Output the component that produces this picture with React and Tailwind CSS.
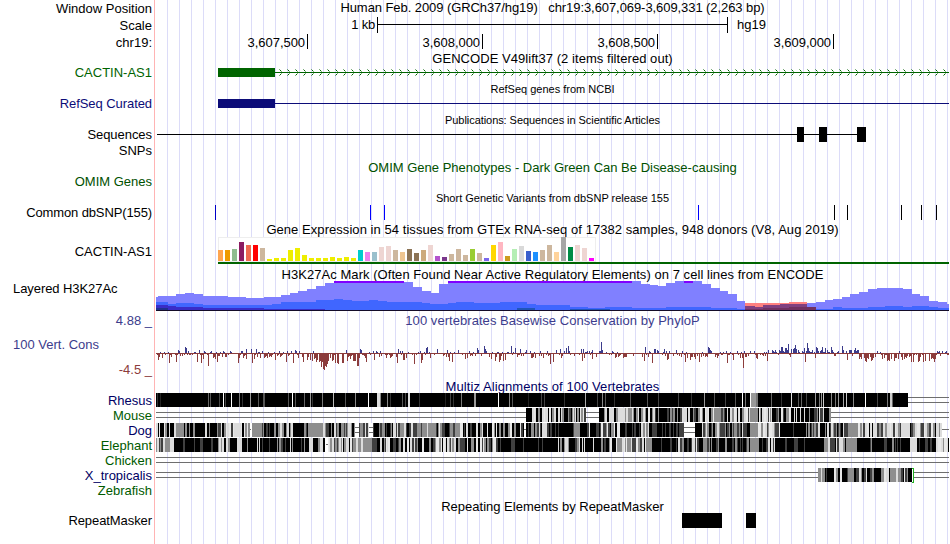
import React from "react";

const LEFT = 156;
const WIDTH = 793;

const tissues = [
  ["#ffa54f", 11], ["#ee9a00", 11], ["#8fbc8f", 12], ["#8b1c62", 19],
  ["#ee6a50", 16], ["#ff0000", 16], ["#cdb79e", 13], ["#eeee00", 2],
  ["#eeee00", 3], ["#eeee00", 3], ["#eeee00", 11], ["#eeee00", 13],
  ["#eeee00", 6], ["#eeee00", 3], ["#eeee00", 3], ["#eeee00", 3],
  ["#eeee00", 4], ["#eeee00", 3], ["#eeee00", 4], ["#eeee00", 3],
  ["#00cdcd", 11], ["#ee82ee", 9], ["#9ac0cd", 9], ["#eed5d2", 14],
  ["#eed5d2", 15], ["#cdb79e", 11], ["#eec591", 9], ["#8b7355", 12],
  ["#8b7355", 8], ["#cdaa7d", 11], ["#eed5d2", 16], ["#b452cd", 5],
  ["#7a378b", 4], ["#cdb79e", 7], ["#cdb79e", 12], ["#cdb79e", 6],
  ["#9acd32", 12], ["#cdb79e", 8], ["#7a67ee", 3], ["#ffd700", 16],
  ["#ffb6c1", 19], ["#cd9b1d", 5], ["#b4eeb4", 12], ["#d9d9d9", 15],
  ["#3a5fcd", 10], ["#1e90ff", 9], ["#cdb79e", 11], ["#cdb79e", 16],
  ["#ffd39b", 9], ["#a6a6a6", 24], ["#008b45", 14], ["#eed5d2", 16],
  ["#eed5d2", 13], ["#ff00ff", 3],
];

// [x, top] pairs, each level holds until the next x
const h3kLight = [
  [156, 297], [158, 296], [176, 294], [185, 293], [194, 294], [203, 296], [228, 297],
  [246, 298], [264, 297], [281, 295], [290, 293], [298, 291], [307, 289], [316, 286],
  [325, 283], [334, 281], [404, 282], [413, 287], [422, 291], [431, 293], [439, 284],
  [448, 281], [641, 284], [650, 285], [658, 286], [666, 283], [675, 281], [702, 284],
  [711, 288], [720, 291], [728, 294], [737, 301], [745, 306], [755, 307], [763, 305],
  [780, 304], [807, 303], [816, 302], [825, 300], [833, 299], [842, 297], [850, 294],
  [859, 292], [868, 289], [877, 288], [894, 288], [903, 289], [912, 291], [912, 294],
  [920, 296], [929, 301], [938, 302], [947, 304],
];
const h3kMid = [
  [156, 302], [168, 304], [176, 303], [194, 304], [203, 305], [264, 305], [272, 304],
  [281, 302], [316, 300], [334, 299], [343, 300], [352, 301], [369, 300], [378, 301],
  [387, 302], [422, 303], [430, 304], [448, 303], [456, 302], [474, 303], [500, 302],
  [527, 304], [536, 305], [570, 307], [588, 308], [605, 307], [632, 308], [666, 307],
  [711, 308], [737, 309], [816, 309], [833, 307], [842, 308], [868, 307], [885, 306],
  [903, 307], [912, 306], [929, 307], [938, 308],
];
const h3kDark = [
  [156, 305], [168, 306], [176, 307], [203, 308], [264, 309], [325, 310],
];

const stepPath = (steps, end = 949, base = 311) => {
  let d = `M${steps[0][0]} ${base}`;
  steps.forEach(([x, y], i) => {
    const next = i + 1 < steps.length ? steps[i + 1][0] : end;
    d += `L${x} ${y}H${next}`;
  });
  return d + `V${base}Z`;
};

const makeRandom = (seed) => () => {
  seed = (seed + 0x6d2b79f5) | 0;
  let t = Math.imul(seed ^ (seed >>> 15), 1 | seed);
  t = (t + Math.imul(t ^ (t >>> 7), 61 | t)) ^ t;
  return ((t ^ (t >>> 14)) >>> 0) / 4294967296;
};

const phyloDown = {
  158: 7, 159: 4, 162: 5, 169: 10, 171: 4, 176: 9, 182: 3, 197: 9, 201: 10, 203: 6,
  208: 13, 215: 6, 217: 9, 222: 4, 225: 4, 238: 10, 239: 5, 243: 5, 246: 6, 252: 10,
  254: 6, 260: 5, 275: 7, 286: 9, 293: 10, 298: 5, 303: 9, 307: 7, 310: 7, 312: 8,
  314: 6, 316: 9, 317: 7, 319: 9, 320: 8, 321: 14, 322: 9, 323: 16, 324: 17, 325: 13,
  326: 14, 327: 11, 328: 8, 333: 7, 335: 10, 337: 10, 338: 11, 342: 10, 343: 10, 350: 6,
  353: 8, 355: 8, 357: 13, 358: 13, 366: 9, 374: 7, 397: 10, 403: 7, 404: 7, 414: 11,
  421: 10, 422: 7, 449: 8, 452: 9, 465: 6, 491: 6, 495: 8, 499: 9, 500: 7, 503: 8,
  505: 7, 532: 5, 535: 5, 550: 11, 553: 9, 582: 8, 592: 6, 615: 5, 623: 5, 644: 8,
  652: 10, 667: 7, 668: 6, 685: 9, 687: 5, 690: 7, 695: 6, 699: 9, 717: 5, 727: 10,
  733: 7, 743: 15, 757: 6, 767: 8, 790: 4, 805: 9, 815: 5, 847: 7, 861: 6, 864: 5,
  866: 9, 868: 6, 882: 6, 888: 7, 904: 6, 911: 9, 913: 9, 918: 9, 919: 8, 923: 9,
  925: 8, 932: 5, 934: 9, 935: 6,
};
const phyloUp = {
  178: 3, 185: 6, 186: 5, 188: 2, 199: 3, 230: 2, 246: 4, 251: 4, 256: 4, 295: 3,
  296: 2, 346: 3, 360: 4, 361: 3, 398: 4, 402: 2, 426: 5, 427: 6, 437: 4, 447: 3,
  458: 3, 477: 5, 478: 3, 484: 7, 485: 4, 511: 7, 515: 5, 520: 4, 526: 3, 556: 3,
  560: 4, 566: 5, 568: 7, 581: 4, 583: 4, 592: 3, 601: 11, 602: 3, 645: 6, 649: 2,
  654: 4, 655: 4, 657: 3, 664: 4, 676: 3, 708: 6, 709: 5, 710: 3, 711: 2, 754: 2,
  768: 3, 781: 6, 782: 6, 785: 5, 786: 5, 788: 9, 791: 4, 793: 4, 794: 5, 795: 8,
  796: 4, 804: 5, 807: 10, 808: 5, 816: 6, 817: 5, 822: 6, 825: 5, 831: 6, 842: 7,
  850: 3, 855: 5, 857: 3, 937: 2, 946: 2,
};

const phyloBars = () => {
  const random = makeRandom(77);
  const bars = [];
  for (let x = LEFT; x < LEFT + WIDTH; x++) {
    const r = random();
    const s = random();
    const conserved = x > 765 && x < 860;
    const dense = (x > 300 && x < 360) || (x > 858 && x < 938);
    let up = phyloUp[x] || 0;
    let down = phyloDown[x] || 0;
    if (!up && !down) {
      if (r < (dense ? 0.06 : conserved ? 0.6 : 0.26)) {
        up = 1 + Math.floor(s * (conserved ? 3 : 2));
      } else if (r < 0.85) {
        down = 1 + Math.floor(s * s * (dense ? 8 : 4.5));
      }
    }
    bars.push({ x, up, down: Math.max(down, 1) });
  }
  return bars;
};

// [x, width, color]
const rhesusMarks = [
  [157, 1, "#333"], [160, 1, "#222"], [208, 1, "#666"], [210, 1, "#555"],
  [219, 1, "#444"], [223, 1, "#fff"], [225, 1, "#444"], [231, 1, "#fff"],
  [239, 1, "#777"], [242, 1, "#333"], [250, 1, "#999"], [258, 1, "#555"],
  [263, 2, "#555"], [288, 1, "#555"], [292, 1, "#fff"], [295, 1, "#555"],
  [304, 1, "#666"], [310, 1, "#999"], [312, 1, "#333"], [322, 1, "#777"],
  [333, 1, "#bbb"], [345, 1, "#555"], [355, 1, "#888"], [368, 1, "#fff"],
  [377, 3, "#ddd"], [380, 1, "#888"], [387, 1, "#888"], [390, 1, "#333"],
  [402, 1, "#555"], [405, 1, "#444"], [408, 2, "#ddd"], [419, 1, "#333"],
  [445, 1, "#222"], [450, 1, "#444"], [453, 1, "#333"], [461, 1, "#777"],
  [474, 2, "#999"], [498, 1, "#fff"], [509, 1, "#888"], [512, 1, "#555"],
  [528, 1, "#222"], [541, 1, "#444"], [544, 1, "#444"], [564, 1, "#333"],
  [585, 1, "#aaa"], [597, 1, "#444"], [602, 1, "#888"], [605, 1, "#555"],
  [614, 1, "#333"], [630, 1, "#555"], [647, 1, "#555"], [658, 1, "#444"],
  [678, 1, "#444"], [691, 1, "#333"], [704, 1, "#999"], [714, 1, "#555"],
  [725, 1, "#444"], [735, 1, "#555"], [742, 1, "#fff"], [745, 1, "#777"],
  [750, 1, "#fff"], [751, 5, "#999"], [756, 2, "#777"], [771, 1, "#666"],
  [781, 1, "#333"], [791, 1, "#ddd"], [798, 1, "#555"], [801, 1, "#666"],
  [806, 1, "#444"], [815, 1, "#999"], [819, 1, "#777"], [821, 1, "#999"],
  [823, 1, "#ccc"], [831, 1, "#888"], [835, 1, "#777"], [838, 1, "#999"],
  [843, 1, "#aaa"], [846, 1, "#ccc"], [853, 1, "#888"], [865, 1, "#fff"],
  [877, 1, "#444"], [887, 1, "#777"], [890, 2, "#ccc"], [892, 1, "#666"],
];

// [from, to, shade levels to choose among: 0 black .. 4 lightest]
const mouse = [
  [526, 532, "000"], [532, 558, "02334"], [558, 586, "00012234"], [599, 604, "0"],
  [604, 632, "223340"], [632, 655, "2233040"], [655, 682, "000122"], [682, 750, "001223304"],
  [750, 758, "2"], [758, 762, "024"], [762, 787, "001234"], [787, 829, "000001234"], [829, 831, "2"],
];
const dog = [
  [156, 158, "3"], [158, 176, "00234"], [176, 184, "2"], [184, 202, "00002"],
  [202, 210, "0223"], [210, 217, "0"], [217, 220, "123"], [220, 250, "01223344"], [252, 262, "2"],
  [262, 308, "0001223"], [308, 318, "2"], [318, 326, "23"], [326, 355, "001223"], [359, 369, "1223"],
  [373, 392, "000122"], [392, 410, "233401"], [410, 462, "001122234"], [462, 524, "00000112234"],
  [526, 542, "011234"], [542, 547, "3"], [547, 574, "0000001"], [574, 579, "2"], [579, 620, "0001224"],
  [620, 641, "00001"], [641, 652, "3402"], [652, 681, "0001"], [681, 684, "1"],
  [695, 699, "0"], [699, 750, "0011223"], [750, 758, "2"], [758, 780, "12234"],
  [780, 790, "0"], [790, 812, "000012"], [812, 848, "0011223"], [848, 858, "2"], [858, 942, "0122334"],
];
const elephant = [
  [156, 165, "01223"], [165, 174, "2334"], [174, 185, "0012"], [185, 194, "0"],
  [194, 216, "00001"], [216, 230, "2340"], [230, 260, "0000023"], [260, 318, "00000123"],
  [318, 325, "0023"], [328, 354, "12223340"], [354, 372, "2223"], [372, 424, "00011234"],
  [424, 456, "000122344"], [456, 500, "00001124"], [500, 546, "000001"], [546, 556, "0"],
  [556, 608, "0000123"], [608, 632, "222340"], [632, 646, "0001234"], [646, 652, "2"],
  [652, 678, "00001"], [678, 700, "011234"], [700, 750, "0000122"], [750, 758, "2"],
  [758, 775, "01233"], [775, 823, "0000001"], [823, 848, "0011223"], [848, 857, "2"],
  [857, 866, "000"], [866, 902, "0000012"], [902, 910, "0"], [910, 917, "3"], [917, 934, "0001"], [934, 949, "001223344"],
];
const xTropicalis = [
  [818, 820, "2"], [820, 827, "01234"], [827, 832, "0"], [832, 848, "0001234"],
  [848, 854, "2"], [854, 878, "0001223"], [878, 890, "012334"], [890, 901, "22223"],
  [901, 908, "1240"], [908, 912, "0"],
];

const shades = ["#000", "#404040", "#8e8e8e", "#dcdcdc", "#e8e8e8"];

const shadeBars = (segments, seed) => {
  const random = makeRandom(seed);
  const bars = [];
  segments.forEach(([from, to, levels]) => {
    let x = from;
    while (x < to) {
      const w = Math.min(to - x, random() < 0.55 ? 1 : 2);
      bars.push({ x, w, fill: shades[Number(levels[Math.floor(random() * levels.length)])] });
      x += w;
    }
  });
  return bars;
};

const arrows = Array.from({ length: 84 }, (_, i) => 279 + i * 8);

// Coordinates inside a track are those of the whole browser image
const Track = ({ top, height, children }) => (
  <svg
    className="block shrink-0"
    width={WIDTH}
    height={height}
    viewBox={`${LEFT} ${top} ${WIDTH} ${height}`}
    shapeRendering="crispEdges"
  >
    {children}
  </svg>
);

const Title = ({ children, className = "" }) => (
  <div className={`flex shrink-0 items-center justify-center whitespace-pre ${className}`}>
    {children}
  </div>
);

const Label = ({ children, className = "" }) => (
  <div className={`flex h-[15px] shrink-0 items-center justify-end whitespace-pre ${className}`}>
    {children}
  </div>
);

const Alignment = ({ segments, seed, y }) =>
  shadeBars(segments, seed).map((b, i) => (
    <rect key={i} x={b.x} y={y} width={b.w} height="14" fill={b.fill} />
  ));

const DoubleLine = ({ from, to, y }) => (
  <g fill="#6e6e6e">
    <rect x={from} y={y + 4} width={to - from} height="1" />
    <rect x={from} y={y + 9} width={to - from} height="1" />
  </g>
);

const Labels = () => (
  <div className="flex w-[155px] shrink-0 flex-col border-r border-[#ffb4b4] pr-[2px]">
    <Label className="h-[17px]">Window Position</Label>
    <Label className="h-[17px]">Scale</Label>
    <Label className="h-[17px]">chr19:</Label>
    <Label className="mt-[14px] text-[#006400]">CACTIN-AS1</Label>
    <Label className="mt-4 tracking-[-0.07px] text-[#0c0c78]">RefSeq Curated</Label>
    <Label className="mt-4 tracking-[-0.05px]">Sequences</Label>
    <Label className="mt-px">SNPs</Label>
    <Label className="mt-4 text-[#005000]">OMIM Genes</Label>
    <Label className="mt-4 tracking-[-0.12px]">Common dbSNP(155)</Label>
    <Label className="mt-6">CACTIN-AS1</Label>
    <Label className="mt-[22px] justify-start pl-[13px] tracking-[-0.07px]">Layered H3K27Ac</Label>
    <Label className="mt-[17px] text-[#3c3c8c]">4.88 _</Label>
    <Label className="mt-[9px] justify-start pl-[13px] text-[#3c3c8c]">100 Vert. Cons</Label>
    <Label className="mt-[10px] text-[#8c3c3c]">-4.5 _</Label>
    <Label className="mt-4 text-[#000064]">Rhesus</Label>
    <Label className="text-[#005a00]">Mouse</Label>
    <Label className="text-[#000064]">Dog</Label>
    <Label className="text-[#005a00]">Elephant</Label>
    <Label className="text-[#005a00]">Chicken</Label>
    <Label className="text-[#000064]">X_tropicalis</Label>
    <Label className="text-[#005a00]">Zebrafish</Label>
    <Label className="mt-[15px] tracking-[-0.08px]">RepeatMasker</Label>
  </div>
);

const ScaleBar = () => (
  <div className="flex h-[18px] shrink-0 items-center pl-[193px]">
    <span className="w-[26px] whitespace-nowrap pb-px text-right tracking-[-0.2px]">1 kb</span>
    <div className="ml-[2px] flex h-4 w-[351px] items-center border-x border-black">
      <div className="mb-px h-px w-full bg-black" />
    </div>
    <span className="ml-[9px] pb-px">hg19</span>
  </div>
);

const Ruler = () => (
  <div className="flex h-4 shrink-0 items-start">
    {[
      ["3,607,500", "w-[152px]"],
      ["3,608,000", "w-[175px]"],
      ["3,608,500", "w-[175px]"],
      ["3,609,000", "w-[176px]"],
    ].map(([position, width]) => (
      <div
        key={position}
        className={`flex h-[15px] items-center justify-end border-r border-black pr-[2px] pt-[2px] tracking-[-0.05px] ${width}`}
      >
        {position}
      </div>
    ))}
  </div>
);

const App = () => {
  return (
    <div className="flex h-[544px] w-[950px] overflow-hidden bg-white font-['Liberation_Sans',Arial,sans-serif] text-[13px] leading-[15px] text-black">
      <Labels />
      <div className="ml-px flex w-[793px] shrink-0 flex-col bg-[linear-gradient(to_right,transparent_11px,#dcdcf8_11px)] bg-[length:12px_100%]">
        <Title className="h-4 pb-[2px] tracking-[-0.075px]">
          Human Feb. 2009 (GRCh37/hg19)   chr19:3,607,069-3,609,331 (2,263 bp)
        </Title>
        <ScaleBar />
        <Ruler />

        <Title className="h-4 tracking-[0.05px]">GENCODE V49lift37 (2 items filtered out)</Title>
        <Track top={66} height={14}>
          <rect x="218" y="68" width="57" height="9" fill="#006400" />
          <rect x="275" y="72" width="674" height="1" fill="#006400" />
          {arrows.map((x) => (
            <g key={x} fill="#006400">
              <path d={`M${x} 69h1v1h-1zM${x + 2} 71h1v1h-1zM${x + 2} 73h1v1h-1zM${x} 75h1v1h-1z`} fillOpacity="0.5" />
              <path d={`M${x + 1} 70h1v1h-1zM${x + 1} 74h1v1h-1z`} />
            </g>
          ))}
        </Track>

        <Title className="h-[17px] pt-[2px] text-[11px]">RefSeq genes from NCBI</Title>
        <Track top={97} height={14}>
          <rect x="218" y="99" width="57" height="9" fill="#0c0c78" />
          <rect x="275" y="103" width="674" height="1" fill="#0c0c78" />
        </Track>

        <Title className="h-4 pt-[3px] text-[11px] tracking-[-0.06px]">
          Publications: Sequences in Scientific Articles
        </Title>
        <Track top={127} height={32}>
          <rect x="157" y="134" width="709" height="1" />
          <rect x="797" y="127" width="7" height="15" />
          <rect x="819" y="127" width="8" height="15" />
          <rect x="857" y="127" width="9" height="15" />
        </Track>

        <Title className="h-4 text-[#005000]">
          OMIM Gene Phenotypes - Dark Green Can Be Disease-causing
        </Title>
        <Title className="mt-[15px] h-[15px] pt-[2px] text-[11px]">
          Short Genetic Variants from dbSNP release 155
        </Title>
        <Track top={205} height={15}>
          <rect x="215" y="205" width="1" height="15" fill="#0000c8" />
          {[370, 384, 698].map((x) => (
            <rect key={x} x={x} y="205" width="1" height="15" fill="#0000ff" />
          ))}
          {[834, 847, 901, 921, 936].map((x) => (
            <rect key={x} x={x} y="205" width="1" height="15" />
          ))}
        </Track>

        <Title className="h-[17px] pt-[2px] tracking-[0.055px]">
          Gene Expression in 54 tissues from GTEx RNA-seq of 17382 samples, 948 donors (V8, Aug 2019)
        </Title>
        <Track top={237} height={28}>
          <rect x="218" y="237" width="378" height="25" fill="#eeeeee" />
          <rect x="219" y="238" width="376" height="23" fill="#fff" />
          {tissues.map(([fill, h], i) => (
            <rect key={i} x={218 + i * 7} y={261 - h} width="5" height={h} fill={fill} />
          ))}
          <rect x="218" y="262" width="731" height="2" fill="#006400" />
        </Track>

        <Title className="h-4 pt-[3px] tracking-[0.05px]">
          H3K27Ac Mark (Often Found Near Active Regulatory Elements) on 7 cell lines from ENCODE
        </Title>
        <Track top={281} height={30}>
          <path d={stepPath([[745, 303], [789, 302]], 807)} fill="#ff8080" />
          <path d={stepPath(h3kLight)} fill="#8080ff" />
          <path d={stepPath(h3kMid)} fill="#4066ff" />
          <path d={stepPath(h3kDark, 449)} fill="#3a2cc8" />
          <path d={stepPath([[745, 306], [755, 307], [763, 305], [780, 304]], 807)} fill="#804080" />
          <path d={stepPath([[745, 309], [763, 308], [789, 307]], 816)} fill="#703060" />
          <rect x="156" y="308" width="12" height="2" fill="#203090" />
          <rect x="517" y="308" width="18" height="2" fill="#2055b8" />
          <rect x="570" y="309" width="40" height="1" fill="#2055b8" />
          <rect x="156" y="310" width="793" height="1" fill="#140c28" />
          {[[334, 70], [448, 184], [684, 9]].map(([x, w]) => (
            <rect key={x} x={x} y="281" width={w} height="2" fill="#8000ff" />
          ))}
        </Track>

        <Title className="h-[18px] pt-px tracking-[0.05px] text-[#3c3c8c]">
          100 vertebrates Basewise Conservation by PhyloP
        </Title>
        <Track top={329} height={49}>
          {phyloBars().map(({ x, up, down }) => (
            <g key={x}>
              <rect x={x} y="353" width="1" height={down} fill="#8c3c3c" />
              {up > 0 && <rect x={x} y={353 - up} width="1" height={up} fill="#3c3c8c" />}
            </g>
          ))}
        </Track>

        <Title className="h-[15px] pt-[2px] tracking-[0.08px] text-[#000064]">
          Multiz Alignments of 100 Vertebrates
        </Title>
        <Track top={393} height={105}>
          <rect x="156" y="393" width="752" height="14" />
          {rhesusMarks.map(([x, w, fill]) => (
            <rect key={x} x={x} y="393" width={w} height="14" fill={fill} />
          ))}
          <DoubleLine from={908} to={949} y={393} />

          <DoubleLine from={156} to={526} y={408} />
          <DoubleLine from={586} to={599} y={408} />
          <DoubleLine from={831} to={949} y={408} />
          <Alignment segments={mouse} seed={11} y={408} />

          <rect x="156" y="423" width="786" height="14" fill="#fff" />
          <DoubleLine from={355} to={359} y={423} />
          <DoubleLine from={369} to={373} y={423} />
          <DoubleLine from={684} to={695} y={423} />
          <rect x="248" y="429" width="3" height="1" fill="#6e6e6e" />
          <rect x="524" y="429" width="2" height="1" fill="#6e6e6e" />
          <rect x="942" y="429" width="7" height="1" fill="#6e6e6e" />
          <Alignment segments={dog} seed={23} y={423} />

          <rect x="156" y="438" width="793" height="14" fill="#fff" />
          <rect x="326" y="444" width="2" height="1" fill="#6e6e6e" />
          <Alignment segments={elephant} seed={35} y={438} />

          <DoubleLine from={156} to={949} y={453} />

          <DoubleLine from={156} to={818} y={468} />
          <DoubleLine from={914} to={949} y={468} />
          <Alignment segments={xTropicalis} seed={47} y={468} />
          <path d="M912 468h2v15h-2v-1h1v-13h-1z" fill="#20b020" />
        </Track>

        <Title className="h-[15px] pt-[2px]">Repeating Elements by RepeatMasker</Title>
        <Track top={513} height={31}>
          <rect x="682" y="513" width="40" height="15" />
          <rect x="746" y="513" width="10" height="15" />
        </Track>
      </div>
    </div>
  );
};

export default App;
